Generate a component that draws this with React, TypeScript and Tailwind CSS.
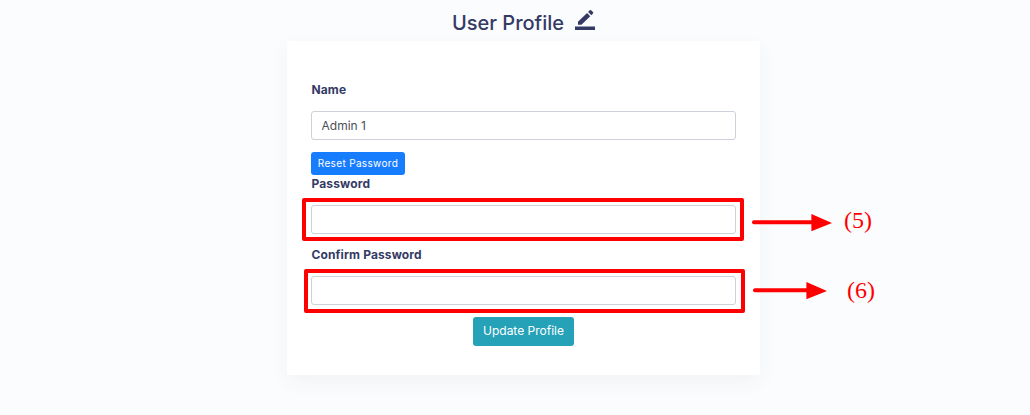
import type { ReactNode } from "react";

function Label({ children }: { children: ReactNode }) {
  return <label className="pl-[0.5px] text-[12px] leading-[18px] font-bold tracking-[0.13px] text-[#343a64]">{children}</label>;
}

function Field({ value, type = "text" }: { value?: string; type?: string }) {
  return (
    <input
      type={type}
      defaultValue={value}
      className="block h-[29px] w-full rounded-[3px] border border-[#cdd1da] bg-white px-[9.5px] text-[12px] text-[#495057] outline-none"
    />
  );
}

function Arrow({ length }: { length: number }) {
  return (
    <svg width={length + 20} height="18" viewBox={`0 0 ${length + 20} 18`} fill="#f00">
      <path d={`M2 8.2H${length}`} stroke="#f00" strokeWidth="4" strokeLinecap="round" />
      <path d={`M${length - 0.6} 0L${length + 20} 8.9L${length - 0.6} 17.3Z`} />
    </svg>
  );
}

export default function App() {
  return (
    <main className="flex h-[415px] w-full flex-col items-center overflow-hidden bg-[#fbfcfe] pl-[17px] font-['Inter',sans-serif]">
      <header className="flex h-[41px] shrink-0 items-start justify-center gap-[9px] pt-2 pl-[2px]">
        <h1 className="text-[20px] leading-[30px] font-[450] text-[#343a64]">User Profile</h1>
        <svg width="24" height="24" viewBox="0 0 24 24" fill="#343a64">
          <path d="M2 18.5h20V22H2z" />
          <path d="m14.06 4.94 3.2 3.2L8.4 16.8H5v-3.1zM15.1 3.9l1.63-1.63a1 1 0 0 1 1.41 0l1.84 1.84a1 1 0 0 1 0 1.41l-1.63 1.63z" />
        </svg>
      </header>
      <section className="flex h-[334px] w-[473px] shrink-0 flex-col gap-3 rounded-[2px] bg-white px-6 pt-10 shadow-[0_6px_20px_rgba(40,50,60,0.05)]">
        <Label>Name</Label>
        <Field value="Admin 1" />
        <div className="flex flex-col items-start">
          <button className="h-[23px] w-[94px] rounded-[3px] bg-[#177dff] text-[10px] leading-[23px] tracking-[0.35px] whitespace-nowrap text-white">Reset Password</button>
          <Label>Password</Label>
        </div>
        <div className="relative">
          <Field type="password" />
          <div className="absolute -top-[7px] -left-[9px] flex h-[43px] items-center">
            <div className="pointer-events-none h-full w-[442px] rounded-[2px] border-4 border-[#f00]" />
            <div className="ml-2 flex items-center gap-3 pt-[7px]">
              <Arrow length={60} />
              <span className="-mt-[6px] font-['Liberation_Serif',serif] text-[24px] leading-[28px] text-[#f00]">(5)</span>
            </div>
          </div>
        </div>
        <Label>Confirm Password</Label>
        <div className="relative">
          <Field type="password" />
          <div className="absolute -top-[7px] -left-[7px] flex h-[44px] items-center">
            <div className="pointer-events-none h-full w-[441px] rounded-[2px] border-4 border-[#f00]" />
            <div className="ml-2 flex items-center gap-5">
              <Arrow length={54} />
              <span className="-mt-[2px] font-['Liberation_Serif',serif] text-[24px] leading-[28px] text-[#f00]">(6)</span>
            </div>
          </div>
        </div>
        <button className="h-[29px] w-[101px] self-center rounded-[3px] bg-[#25a2b8] pb-[2px] text-[12px] leading-[26px] text-white">Update Profile</button>
      </section>
    </main>
  );
}
